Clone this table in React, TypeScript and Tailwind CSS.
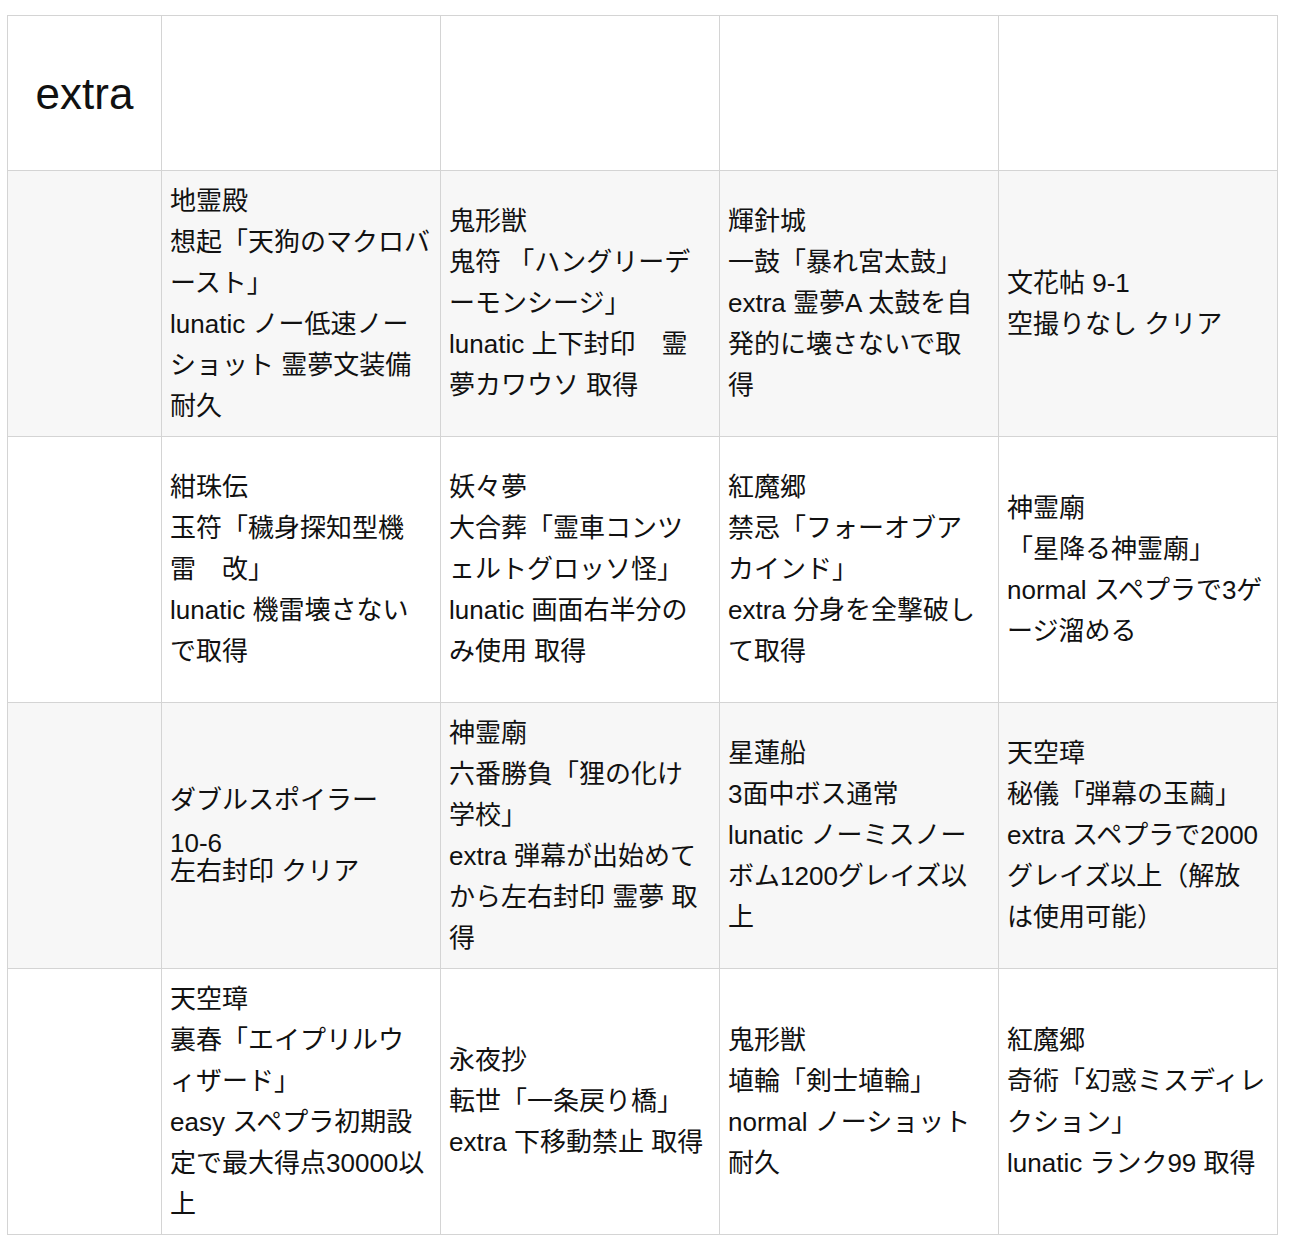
type Cell = string[] | null;

const rows: { shade: boolean; cells: Cell[] }[] = [
  {
    shade: true,
    cells: [
      null,
      ["地霊殿", "想起「天狗のマクロバ", "ースト」", "lunatic ノー低速ノー", "ショット 霊夢文装備", "耐久"],
      ["鬼形獣", "鬼符 「ハングリーデ", "ーモンシージ」", "lunatic 上下封印　霊", "夢カワウソ 取得"],
      ["輝針城", "一鼓「暴れ宮太鼓」", "extra 霊夢A 太鼓を自", "発的に壊さないで取", "得"],
      ["文花帖 9-1", "空撮りなし クリア"],
    ],
  },
  {
    shade: false,
    cells: [
      null,
      ["紺珠伝", "玉符「穢身探知型機", "雷　改」", "lunatic 機雷壊さない", "で取得"],
      ["妖々夢", "大合葬「霊車コンツ", "ェルトグロッソ怪」", "lunatic 画面右半分の", "み使用 取得"],
      ["紅魔郷", "禁忌「フォーオブア", "カインド」", "extra 分身を全撃破し", "て取得"],
      ["神霊廟", "「星降る神霊廟」", "normal スペプラで3ゲ", "ージ溜める"],
    ],
  },
  {
    shade: true,
    cells: [
      null,
      null,
      ["神霊廟", "六番勝負「狸の化け", "学校」", "extra 弾幕が出始めて", "から左右封印 霊夢 取", "得"],
      ["星蓮船", "3面中ボス通常", "lunatic ノーミスノー", "ボム1200グレイズ以", "上"],
      ["天空璋", "秘儀「弾幕の玉繭」", "extra スペプラで2000", "グレイズ以上（解放", "は使用可能）"],
    ],
  },
  {
    shade: false,
    cells: [
      null,
      ["天空璋", "裏春「エイプリルウ", "ィザード」", "easy スペプラ初期設", "定で最大得点30000以", "上"],
      ["永夜抄", "転世「一条戻り橋」", "extra 下移動禁止 取得"],
      ["鬼形獣", "埴輪「剣士埴輪」", "normal ノーショット", "耐久"],
      ["紅魔郷", "奇術「幻惑ミスディレ", "クション」", "lunatic ランク99 取得"],
    ],
  },
];

function Lines({ lines }: { lines: string[] }) {
  return (
    <>
      {lines.map((l, i) => (
        <div key={i} className="whitespace-nowrap">
          {l}
        </div>
      ))}
    </>
  );
}

export default function App() {
  return (
    <div
      className="min-h-[1250px] bg-white pl-[7px] pt-[15px] text-[#111]"
      style={{ fontFamily: '"Liberation Sans", "Noto Sans CJK JP", sans-serif' }}
    >
      <table className="table-fixed border-collapse text-[26px] leading-[41px]">
        <colgroup>
          <col className="w-[154px]" />
          <col className="w-[279px]" />
          <col className="w-[279px]" />
          <col className="w-[279px]" />
          <col className="w-[279px]" />
        </colgroup>
        <tbody>
          <tr className="h-[155px] bg-white">
            <th className="border border-[#d4d4d4] text-center align-middle text-[44px] font-normal">
              extra
            </th>
            <td className="border border-[#d4d4d4]" />
            <td className="border border-[#d4d4d4]" />
            <td className="border border-[#d4d4d4]" />
            <td className="border border-[#d4d4d4]" />
          </tr>
          {rows.map((row, ri) => (
            <tr key={ri} className={row.shade ? "h-[266px] bg-[#f7f7f7]" : "h-[266px] bg-white"}>
              {row.cells.map((cell, ci) => (
                <td key={ci} className="border border-[#d4d4d4] px-[8px] py-[9px] align-middle">
                  {ri === 2 && ci === 1 ? (
                    <div className="pb-[6px]">
                      <div>ダブルスポイラー</div>
                      <div className="mt-[8px] leading-[28px]">10-6</div>
                      <div className="leading-[28px]">左右封印 クリア</div>
                    </div>
                  ) : cell ? (
                    <Lines lines={cell} />
                  ) : null}
                </td>
              ))}
            </tr>
          ))}
        </tbody>
      </table>
    </div>
  );
}
